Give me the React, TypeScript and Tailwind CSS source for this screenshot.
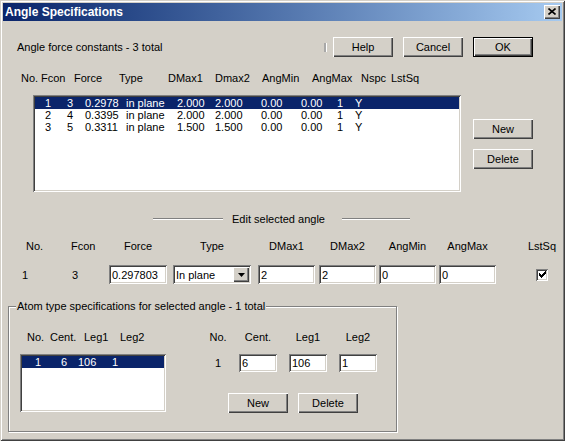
import React from "react";

const RAISED =
  "bg-[#d4d0c8] shadow-[inset_1px_1px_0_#ffffff,inset_-1px_-1px_0_#404040,inset_-2px_-2px_0_#808080]";
const SUNKEN =
  "bg-white shadow-[inset_1px_1px_0_#808080,inset_-1px_-1px_0_#ffffff,inset_2px_2px_0_#404040,inset_-2px_-2px_0_#d4d0c8]";

function Button({ label, className = "" }: { label: string; className?: string }) {
  return (
    <div className={`${RAISED} w-[60px] h-[20px] flex items-center justify-center ${className}`}>
      {label}
    </div>
  );
}

function DefaultButton({ label, className = "" }: { label: string; className?: string }) {
  return (
    <div className={`border border-black w-[60px] h-[20px] ${className}`}>
      <div className={`${RAISED} w-full h-full flex items-center justify-center`}>{label}</div>
    </div>
  );
}

function Field({ value, className = "" }: { value: string; className?: string }) {
  return (
    <div className={`${SUNKEN} flex items-center pl-[3px] overflow-hidden whitespace-nowrap ${className}`}>
      {value}
    </div>
  );
}

function Col({
  header,
  children,
  className = "",
}: {
  header: string;
  children: React.ReactNode;
  className?: string;
}) {
  return (
    <div className={`flex flex-col items-center ${className}`}>
      <div className="h-[12px] whitespace-nowrap">{header}</div>
      {children}
    </div>
  );
}

const rows = [
  ["1", "3", "0.2978", "in plane", "2.000", "2.000", "0.00", "0.00", "1", "Y"],
  ["2", "4", "0.3395", "in plane", "2.000", "2.000", "0.00", "0.00", "1", "Y"],
  ["3", "5", "0.3311", "in plane", "1.500", "1.500", "0.00", "0.00", "1", "Y"],
];

const rowWidths = [
  "w-[22px]",
  "w-[18px]",
  "w-[41px]",
  "w-[51px]",
  "w-[38px]",
  "w-[46px]",
  "w-[40px]",
  "w-[36px]",
  "w-[18px]",
  "flex-1",
];

export default function App() {
  return (
    <div className="w-[565px] h-[441px] bg-[#d4d0c8] p-[3px] flex flex-col text-[11px] leading-[12px] text-black font-['Liberation_Sans','Arial',sans-serif] shadow-[inset_1px_1px_0_#d4d0c8,inset_-1px_-1px_0_#404040,inset_2px_2px_0_#ffffff,inset_-2px_-2px_0_#808080]">
      {/* Title bar */}
      <div className="h-[18px] shrink-0 flex items-center justify-between bg-linear-to-r from-[#0a246a] to-[#a6caf0] pl-[2px] pr-[2px]">
        <span className="text-white font-bold text-[12px] leading-[14px]">Angle Specifications</span>
        <div className={`${RAISED} w-[16px] h-[14px] flex items-center justify-center`}>
          <svg width="8" height="7" viewBox="0 0 8 7" className="mb-[1px]">
            <path d="M0.5 0.5 L7.5 6.5 M7.5 0.5 L0.5 6.5" stroke="#000" strokeWidth="1.6" fill="none" />
          </svg>
        </div>
      </div>

      {/* Body */}
      <div className="flex-1 flex flex-col">
        {/* Top row */}
        <div className="mt-[16px] h-[20px] flex items-center pl-[14px]">
          <div className="w-[307px] whitespace-nowrap">Angle force constants - 3 total</div>
          <div className="w-[2px] h-[9px] bg-[#a8a8a8] border-r border-white box-content" />
          <Button label="Help" className="ml-[6px]" />
          <Button label="Cancel" className="ml-[10px]" />
          <DefaultButton label="OK" className="ml-[10px]" />
        </div>

        {/* List headers */}
        <div className="mt-[15px] h-[12px] flex pl-[18px] whitespace-nowrap">
          <span className="w-[20px]">No.</span>
          <span className="w-[33px]">Fcon</span>
          <span className="w-[45px]">Force</span>
          <span className="w-[49px]">Type</span>
          <span className="w-[47px]">DMax1</span>
          <span className="w-[47px]">Dmax2</span>
          <span className="w-[50px]">AngMin</span>
          <span className="w-[49px]">AngMax</span>
          <span className="w-[30px]">Nspc</span>
          <span>LstSq</span>
        </div>

        {/* List + buttons */}
        <div className="mt-[11px] flex pl-[30px]">
          <div className={`${SUNKEN} w-[428px] h-[97px] p-[2px] flex flex-col`}>
            {rows.map((r, i) => (
              <div
                key={i}
                className={`h-[12px] flex pl-[10px] whitespace-nowrap ${
                  i === 0 ? "bg-[#0a246a] text-white" : ""
                }`}
              >
                {r.map((c, j) => (
                  <span key={j} className={rowWidths[j]}>
                    {c}
                  </span>
                ))}
              </div>
            ))}
          </div>
          <div className="ml-[12px] pt-[24px] flex flex-col gap-[10px]">
            <Button label="New" />
            <Button label="Delete" />
          </div>
        </div>

        {/* Separator */}
        <div className="mt-[21px] h-[12px] flex items-center pl-[150px]">
          <div className="w-[70px] h-[2px] border-t border-b border-t-[#808080] border-b-white" />
          <div className="ml-[9px] w-[110px] whitespace-nowrap">Edit selected angle</div>
          <div className="w-[68px] h-[2px] border-t border-b border-t-[#808080] border-b-white" />
        </div>

        {/* Edit row */}
        <div className="mt-[15px] flex pl-[19px]">
          <div className="w-[49px] flex flex-col">
            <div className="h-[12px] pl-[4px]">No.</div>
            <div className="mt-[13px] h-[19px] flex items-center">1</div>
          </div>
          <div className="w-[38px] flex flex-col">
            <div className="h-[12px]">Fcon</div>
            <div className="mt-[13px] h-[19px] flex items-center pl-[1px]">3</div>
          </div>
          <Col header="Force" className="w-[58px]">
            <Field value="0.297803" className="mt-[13px] h-[19px] w-full" />
          </Col>
          <Col header="Type" className="w-[78px] ml-[6px]">
            <div className={`${SUNKEN} mt-[13px] h-[19px] w-full p-[2px] flex`}>
              <div className="flex-1 flex items-center pl-[1px] whitespace-nowrap">In plane</div>
              <div className={`${RAISED} w-[16px] h-full flex items-center justify-center`}>
                <svg width="7" height="4" viewBox="0 0 7 4">
                  <path d="M0 0 H7 L3.5 4 Z" fill="#000" />
                </svg>
              </div>
            </div>
          </Col>
          <Col header="DMax1" className="w-[57px] ml-[7px]">
            <Field value="2" className="mt-[13px] h-[19px] w-full" />
          </Col>
          <Col header="DMax2" className="w-[57px] ml-[4px]">
            <Field value="2" className="mt-[13px] h-[19px] w-full" />
          </Col>
          <Col header="AngMin" className="w-[57px] ml-[3px]">
            <Field value="0" className="mt-[13px] h-[19px] w-full" />
          </Col>
          <Col header="AngMax" className="w-[57px] ml-[3px]">
            <Field value="0" className="mt-[13px] h-[19px] w-full" />
          </Col>
          <Col header="LstSq" className="w-[40px] ml-[26px]">
            <div className="mt-[13px] h-[19px] flex items-center">
              <div className={`${SUNKEN} w-[12px] h-[12px] flex items-center justify-center`}>
                <svg width="7" height="7" viewBox="0 0 7 7">
                  <path
                    d="M0 2h1v1h1v1h1v-1h1v-1h1v-1h1v-1h1v3h-1v1h-1v1h-1v1h-1v1h-1v-1h-1v-1h-1v-1h-1z"
                    fill="#000"
                  />
                </svg>
              </div>
            </div>
          </Col>
        </div>

        {/* Group box */}
        <div className="mt-[22px] ml-[5px] w-[389px] h-[126px] relative border border-[#808080] shadow-[1px_1px_0_#ffffff,inset_1px_1px_0_#ffffff]">
          <div className="absolute left-[7px] top-[-7px] px-[1px] bg-[#d4d0c8] whitespace-nowrap">
            Atom type specifications for selected angle - 1 total
          </div>
          <div className="flex pl-[11px] pt-[24px]">
            {/* Left list */}
            <div className="w-[146px] flex flex-col">
              <div className="h-[12px] flex pl-[7px] whitespace-nowrap">
                <span className="w-[23px]">No.</span>
                <span className="w-[34px]">Cent.</span>
                <span className="w-[36px]">Leg1</span>
                <span>Leg2</span>
              </div>
              <div className={`${SUNKEN} mt-[11px] h-[58px] p-[2px]`}>
                <div className="h-[12px] flex pl-[13px] bg-[#0a246a] text-white whitespace-nowrap">
                  <span className="w-[26px]">1</span>
                  <span className="w-[17px]">6</span>
                  <span className="w-[34px]">106</span>
                  <span>1</span>
                </div>
              </div>
            </div>
            {/* Right edit */}
            <div className="ml-[37px] flex flex-col">
              <div className="flex">
                <Col header="No." className="w-[30px]">
                  <div className="mt-[11px] h-[18px] flex items-center">1</div>
                </Col>
                <Col header="Cent." className="w-[38px] ml-[6px]">
                  <Field value="6" className="mt-[11px] h-[18px] w-full" />
                </Col>
                <Col header="Leg1" className="w-[38px] ml-[12px]">
                  <Field value="106" className="mt-[11px] h-[18px] w-full" />
                </Col>
                <Col header="Leg2" className="w-[38px] ml-[12px]">
                  <Field value="1" className="mt-[11px] h-[18px] w-full" />
                </Col>
              </div>
              <div className="mt-[21px] pl-[25px] flex">
                <Button label="New" />
                <Button label="Delete" className="ml-[10px]" />
              </div>
            </div>
          </div>
        </div>
      </div>
    </div>
  );
}
